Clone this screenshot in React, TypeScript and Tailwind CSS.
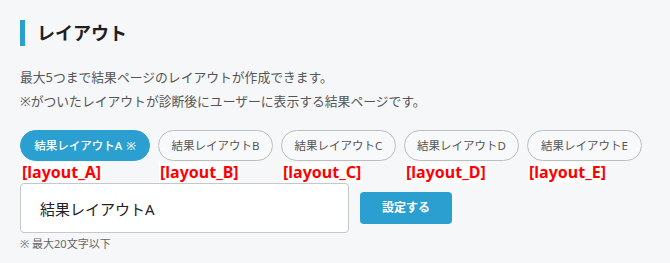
import React, { useState } from "react";

const tabs = [
  { name: "結果レイアウトA", key: "A", mark: true },
  { name: "結果レイアウトB", key: "B", mark: false },
  { name: "結果レイアウトC", key: "C", mark: false },
  { name: "結果レイアウトD", key: "D", mark: false },
  { name: "結果レイアウトE", key: "E", mark: false },
];

const App = () => {
  const [active, setActive] = useState("A");
  const [title, setTitle] = useState("結果レイアウトA");

  return (
    <div className="w-[670px] h-[263px] bg-[#f6f7f9] px-[20px] pt-[20px] font-['Noto_Sans','Noto_Sans_CJK_JP',sans-serif] overflow-hidden">
      <h2 className="flex items-center h-[26px] border-l-[5px] border-[#2a9fd0] pl-[12px] text-[18px] font-bold text-[#1f1f1f] leading-none">
        レイアウト
      </h2>

      <div className="mt-[19px] text-[12.8px] leading-[24px] text-[#555]">
        <p>最大5つまで結果ページのレイアウトが作成できます。</p>
        <p>※がついたレイアウトが診断後にユーザーに表示する結果ページです。</p>
      </div>

      <div className="mt-[17px] flex gap-[8px]">
        {tabs.map((tab) => (
          <div key={tab.key} className="relative">
            <button
              onClick={() => setActive(tab.key)}
              className={
                active === tab.key
                  ? "w-[130px] h-[31px] rounded-full bg-[#2b9fcf] border border-[#2b9fcf] text-white text-[11.5px] font-medium"
                  : "w-[115px] h-[31px] rounded-full bg-[#f8f9fa] border border-[#bdbdbd] text-[#555] text-[11.5px]"
              }
            >
              {tab.name}
              {tab.mark && <span className="ml-[4px]">※</span>}
            </button>
            <span className="absolute left-[1px] top-[32px] z-10 bg-white px-[1px] text-[16px] leading-[21px] font-bold text-[#ff0000] whitespace-nowrap">
              [layout_{tab.key}]
            </span>
          </div>
        ))}
      </div>

      <div className="mt-[22px] flex items-center gap-[11px]">
        <input
          value={title}
          onChange={(e) => setTitle(e.target.value)}
          className="w-[329px] h-[50px] rounded-[4px] border border-[#c4c7cc] bg-white pl-[19px] text-[15px] text-[#222] outline-none"
        />
        <button className="w-[92px] h-[32px] rounded-[4px] bg-[#2b9fcf] text-white text-[12px] font-bold">
          設定する
        </button>
      </div>

      <p className="mt-[3px] text-[11px] leading-[16px] text-[#666]">※ 最大20文字以下</p>
    </div>
  );
};

export default App;
